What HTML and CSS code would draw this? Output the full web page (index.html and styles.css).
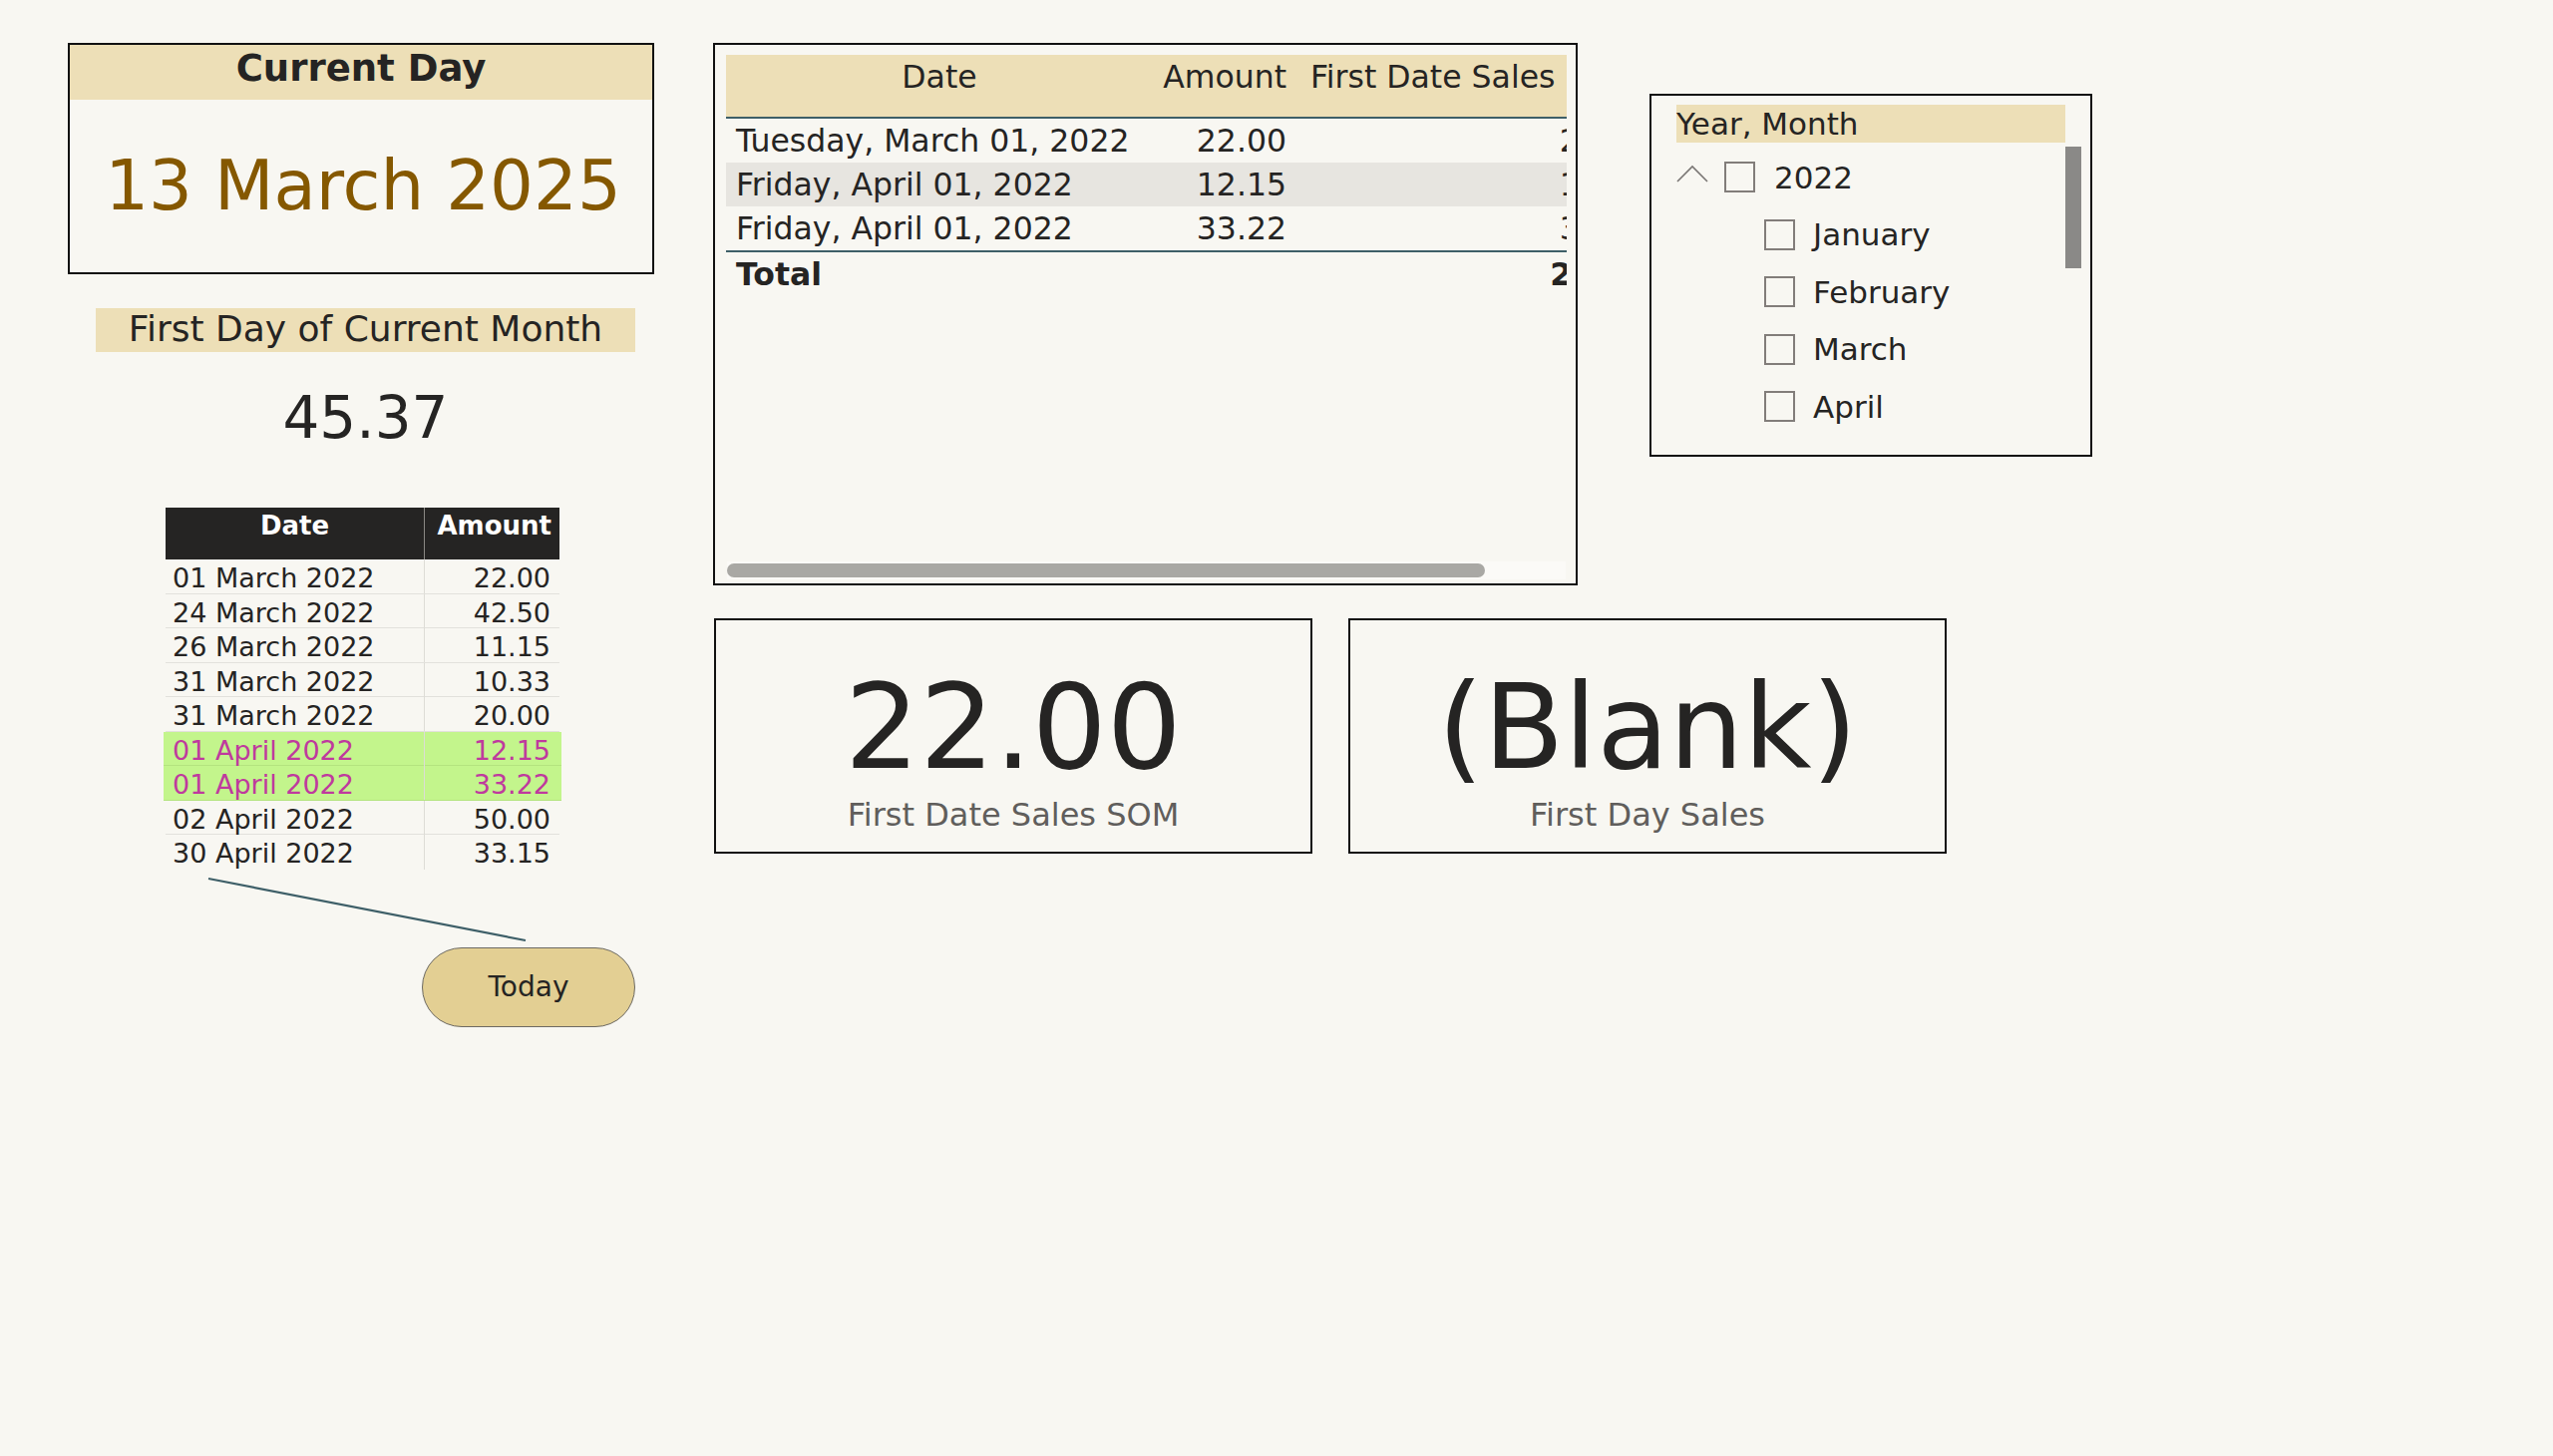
FILE: index.html
```html
<!DOCTYPE html>
<html lang="en">
<head>
<meta charset="utf-8">
<title>Report</title>
<link rel="stylesheet" href="styles.css">
</head>
<body>
<div class="canvas">
  <div class="col-left">
    <section class="current-day">
      <div class="cd-head">Current Day</div>
      <div class="cd-value">13 March 2025</div>
    </section>
    <div class="fdm-label">First Day of Current Month</div>
    <div class="fdm-value">45.37</div>
    <div class="mini">
      <div class="mini-row mini-head"><div class="c-date">Date</div><div class="c-amt">Amount</div></div>
      <div class="mini-row"><div class="c-date">01 March 2022</div><div class="c-amt">22.00</div></div>
      <div class="mini-row"><div class="c-date">24 March 2022</div><div class="c-amt">42.50</div></div>
      <div class="mini-row"><div class="c-date">26 March 2022</div><div class="c-amt">11.15</div></div>
      <div class="mini-row"><div class="c-date">31 March 2022</div><div class="c-amt">10.33</div></div>
      <div class="mini-row"><div class="c-date">31 March 2022</div><div class="c-amt">20.00</div></div>
      <div class="mini-row hl"><div class="c-date">01 April 2022</div><div class="c-amt">12.15</div></div>
      <div class="mini-row hl"><div class="c-date">01 April 2022</div><div class="c-amt">33.22</div></div>
      <div class="mini-row"><div class="c-date">02 April 2022</div><div class="c-amt">50.00</div></div>
      <div class="mini-row last"><div class="c-date">30 April 2022</div><div class="c-amt">33.15</div></div>
    </div>
    <svg class="connector" width="588" height="78" viewBox="0 0 588 78"><line x1="141" y1="9" x2="459" y2="71" stroke="#3e5f68" stroke-width="2.2"/></svg>
    <button class="today">Today</button>
  </div>

  <div class="col-right">
    <div class="top-row">
      <section class="matrix">
        <div class="mx-view">
          <div class="mx-grid">
            <div class="mx-row mx-head">
              <div class="mx-c mx-date center">Date</div>
              <div class="mx-c mx-amt">Amount</div>
              <div class="mx-c mx-fds head-left">First Date Sales SOM</div>
            </div>
            <div class="mx-row">
              <div class="mx-c mx-date">Tuesday, March 01, 2022</div>
              <div class="mx-c mx-amt">22.00</div>
              <div class="mx-c mx-fds">22.00</div>
            </div>
            <div class="mx-row mx-alt">
              <div class="mx-c mx-date">Friday, April 01, 2022</div>
              <div class="mx-c mx-amt">12.15</div>
              <div class="mx-c mx-fds">12.15</div>
            </div>
            <div class="mx-row mx-lastrow">
              <div class="mx-c mx-date">Friday, April 01, 2022</div>
              <div class="mx-c mx-amt">33.22</div>
              <div class="mx-c mx-fds">33.22</div>
            </div>
            <div class="mx-row mx-total">
              <div class="mx-c mx-date">Total</div>
              <div class="mx-c mx-amt"></div>
              <div class="mx-c mx-fds">22.00</div>
            </div>
          </div>
        </div>
        <div class="hscroll"><div class="hthumb"></div></div>
      </section>

      <section class="slicer">
        <div class="sl-head">Year, Month</div>
        <div class="sl-body">
          <div class="sl-list">
            <div class="sl-item sl-year">
              <svg class="chev" width="32" height="18" viewBox="0 0 32 18"><polyline points="1,17 16,2 31,17" fill="none" stroke="#7a7674" stroke-width="1.6"/></svg>
              <span class="box"></span>
              <span class="sl-text">2022</span>
            </div>
            <div class="sl-item sl-month"><span class="box"></span><span class="sl-text">January</span></div>
            <div class="sl-item sl-month"><span class="box"></span><span class="sl-text">February</span></div>
            <div class="sl-item sl-month"><span class="box"></span><span class="sl-text">March</span></div>
            <div class="sl-item sl-month"><span class="box"></span><span class="sl-text">April</span></div>
          </div>
          <div class="vscroll"></div>
        </div>
      </section>
    </div>

    <div class="cards">
      <section class="kpi">
        <div class="kpi-value">22.00</div>
        <div class="kpi-label">First Date Sales SOM</div>
      </section>
      <section class="kpi">
        <div class="kpi-value">(Blank)</div>
        <div class="kpi-label">First Day Sales</div>
      </section>
    </div>
  </div>
</div>
</body>
</html>
```

FILE: styles.css
```css
html, body {
  margin: 0;
  padding: 0;
}
body {
  background: #f8f7f2;
  color: #252423;
  font-family: "DejaVu Sans", Verdana, sans-serif;
  width: 2560px;
  height: 1460px;
  overflow: hidden;
}
.canvas {
  display: flex;
  align-items: flex-start;
  padding: 43px 0 0 68px;
  gap: 59px;
}

/* ---------- left column ---------- */
.col-left {
  width: 588px;
  display: flex;
  flex-direction: column;
  align-items: flex-start;
}
.current-day {
  width: 588px;
  height: 232px;
  box-sizing: border-box;
  border: 2px solid #111;
  display: flex;
  flex-direction: column;
}
.cd-head {
  height: 55px;
  line-height: 48px;
  background: #eddfb7;
  text-align: center;
  font-weight: bold;
  font-size: 37px;
}
.cd-value {
  flex: 1;
  display: flex;
  align-items: center;
  justify-content: center;
  padding-left: 4px;
  padding-bottom: 2px;
  font-size: 69px;
  color: #855800;
}
.fdm-label {
  margin: 34px 0 0 28px;
  width: 541px;
  height: 44px;
  line-height: 42px;
  background: #eddfb7;
  text-align: center;
  font-size: 36px;
  white-space: nowrap;
}
.fdm-value {
  margin-left: 28px;
  width: 541px;
  height: 156px;
  line-height: 132px;
  text-align: center;
  font-size: 58px;
}

.mini {
  margin-left: 98px;
  width: 395px;
  font-size: 27px;
}
.mini-row {
  display: grid;
  grid-template-columns: 260px 135px;
  height: 34.5px;
  box-sizing: border-box;
  border-bottom: 1px solid #e2e1dc;
  line-height: 30px;
  white-space: nowrap;
}
.mini-row > div {
  padding-top: 4px;
}
.mini-row .c-date {
  padding-left: 7px;
  border-right: 1px solid #dddcd6;
}
.mini-row .c-amt {
  text-align: right;
  padding-right: 9px;
}
.mini-head {
  height: 52px;
  background: #252423;
  color: #fff;
  font-weight: bold;
  font-size: 26px;
  line-height: 36px;
  border-bottom: none;
}
.mini-head > div { padding-top: 0; }
.mini-head .c-date {
  padding-left: 0;
  text-align: center;
  border-right: 1px solid #8a8884;
}
.mini-head .c-amt { padding-right: 8px; }
.mini-row.hl {
  background: #c3f58c;
  color: #bf3a9e;
  border-bottom-color: #b4e47f;
  margin: 0 -2px;
  padding: 0 2px;
  width: 399px;
}
.mini-row.last { border-bottom: none; }

.connector {
  display: block;
}
.today {
  margin-left: 355px;
  width: 214px;
  height: 80px;
  border-radius: 40px;
  background: #e3cf93;
  border: 1px solid #6d6a63;
  color: #252423;
  font-family: "DejaVu Sans", Verdana, sans-serif;
  font-size: 28px;
  padding: 0;
}

/* ---------- right column ---------- */
.col-right {
  display: flex;
  flex-direction: column;
}
.top-row {
  display: flex;
  align-items: flex-start;
}
.matrix {
  width: 867px;
  height: 544px;
  box-sizing: border-box;
  border: 2px solid #111;
  padding: 10px 9px 4px 11px;
  display: flex;
  flex-direction: column;
}
.mx-view {
  flex: 1;
  width: 843px;
  overflow: hidden;
}
.mx-grid {
  width: 936px;
  font-size: 31.5px;
}
.mx-row {
  display: grid;
  grid-template-columns: 428px 144px 364px;
  height: 44px;
  line-height: 44px;
  white-space: nowrap;
}
.mx-head {
  height: 62px;
  background: #eddfb7;
  border-bottom: 2px solid #3e5f68;
}
.mx-alt { background: #e7e5e0; }
.mx-lastrow {
  border-bottom: 2px solid #3e5f68;
}
.mx-total { font-weight: bold; }
.mx-date { padding-left: 10px; }
.mx-date.center { padding-left: 0; text-align: center; }
.mx-amt { text-align: right; padding-right: 10px; }
.mx-fds { text-align: right; padding-right: 10px; }
.mx-fds.head-left { text-align: left; padding-left: 14px; padding-right: 0; }
.hscroll {
  height: 18px;
  width: 841px;
  margin-left: 1px;
  background: #fbfaf7;
  display: flex;
  align-items: center;
}
.hthumb {
  width: 760px;
  height: 14px;
  border-radius: 7px;
  background: #a9a8a4;
}

.slicer {
  margin: 51px 0 0 72px;
  width: 444px;
  height: 364px;
  box-sizing: border-box;
  border: 2px solid #111;
  padding: 9px 0 0 25px;
}
.sl-head {
  width: 390px;
  height: 38px;
  line-height: 38px;
  background: #eddfb7;
  font-size: 31px;
  white-space: nowrap;
}
.sl-body {
  display: flex;
  align-items: flex-start;
}
.sl-list {
  width: 390px;
  padding-top: 6px;
}
.sl-item {
  height: 57.5px;
  display: flex;
  align-items: center;
  font-size: 31px;
}
.chev {
  display: block;
  margin: 0 16px 7px 0;
}
.box {
  width: 31px;
  height: 31px;
  box-sizing: border-box;
  border: 2px solid #827d7a;
  flex: none;
}
.sl-year .sl-text { margin-left: 19px; }
.sl-month { padding-left: 88px; }
.sl-month .sl-text { margin-left: 18px; }
.vscroll {
  margin-top: 4px;
  width: 16px;
  height: 122px;
  background: #8a8987;
}

.cards {
  display: flex;
  gap: 36px;
  margin: 33px 0 0 1px;
}
.kpi {
  width: 600px;
  height: 236px;
  box-sizing: border-box;
  border: 2px solid #111;
  display: flex;
  flex-direction: column;
  align-items: center;
  padding-top: 57px;
}
.kpi-value {
  height: 100px;
  line-height: 100px;
  font-size: 118px;
  white-space: nowrap;
}
.kpi-label {
  margin-top: 20px;
  height: 36px;
  line-height: 36px;
  font-size: 32px;
  color: #605e5c;
  white-space: nowrap;
}
```
